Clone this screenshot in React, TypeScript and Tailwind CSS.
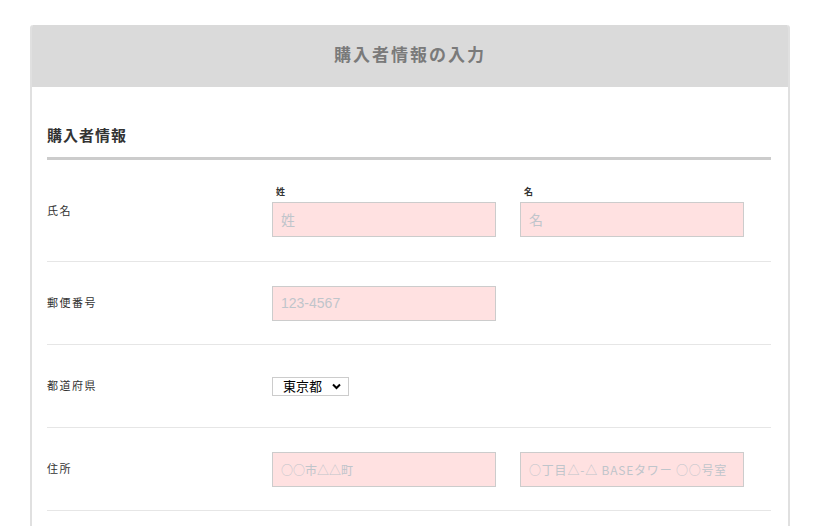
import React from 'react';

const FONT = "font-['Liberation_Sans','Noto_Sans_CJK_JP',sans-serif]";

const inputCls =
  'w-[224px] h-[35px] border border-[#cccccc] bg-[#ffe1e1] px-[8px] text-[14px] text-[#333] outline-none placeholder:text-[#bfc5cb]';

const Row: React.FC<{ label: string; children: React.ReactNode }> = ({ label, children }) => (
  <div className="flex h-[83px] items-center border-b border-[#e6e6e6]">
    <div className="w-[225px] shrink-0 text-[11px] tracking-[1.5px] text-[#333]">{label}</div>
    <div className="flex gap-[24px]">{children}</div>
  </div>
);

export default function App() {
  return (
    <div className={`min-h-screen bg-white pt-[25px] pl-[30px] ${FONT}`}>
      <div className="w-[760px] border-x-2 border-[#e0e0e0] rounded-t-[3px] overflow-hidden">
        {/* Header */}
        <div className="h-[62px] bg-[#dadada] flex items-center justify-center text-[17px] font-bold tracking-[2px] text-[#7a7a7a]">
          購入者情報の入力
        </div>

        <div className="pl-[15px] pr-[17px] pt-[38px] pb-[20px]">
          <h2 className="text-[15px] font-bold tracking-[1px] text-[#333] leading-[22px] pb-[10px] border-b-[3px] border-[#cccccc]">
            購入者情報
          </h2>

          {/* 氏名 */}
          <div className="flex h-[102px] items-center border-b border-[#e6e6e6] pt-[1px]">
            <div className="w-[225px] shrink-0 text-[11px] tracking-[1.5px] text-[#333]">氏名</div>
            <div className="flex gap-[24px]">
              <div className="flex flex-col">
                <span className="pl-[4px] text-[9px] leading-[14px] font-bold text-[#333] mb-[3px]">姓</span>
                <input className={inputCls} placeholder="姓" />
              </div>
              <div className="flex flex-col">
                <span className="pl-[4px] text-[9px] leading-[14px] font-bold text-[#333] mb-[3px]">名</span>
                <input className={inputCls} placeholder="名" />
              </div>
            </div>
          </div>

          <Row label="郵便番号">
            <input className={inputCls} placeholder="123-4567" />
          </Row>

          <Row label="都道府県">
            <div className="relative h-[19px]">
              <select
                defaultValue="東京都"
                className="block appearance-none w-[77px] h-[19px] border border-[#cccccc] bg-white pl-[10px] text-[13px] leading-[17px] text-black outline-none"
              >
                <option>東京都</option>
                <option>大阪府</option>
                <option>北海道</option>
              </select>
              <svg
                className="pointer-events-none absolute right-[8px] top-[6px]"
                width="9"
                height="7"
                viewBox="0 0 9 7"
              >
                <path d="M1 1.5l3.5 3.5 3.5-3.5" fill="none" stroke="#000" strokeWidth="2" />
              </svg>
            </div>
          </Row>

          <Row label="住所">
            <input
              className={`${inputCls} font-['Noto_Sans_CJK_JP',sans-serif] !text-[12px]`}
              placeholder="○○市△△町"
            />
            <input
              className={`${inputCls} font-['Noto_Sans_CJK_JP',sans-serif] !text-[12px] tracking-[0.8px]`}
              placeholder="○丁目△-△ BASEタワー ○○号室"
            />
          </Row>
        </div>
      </div>
    </div>
  );
}
